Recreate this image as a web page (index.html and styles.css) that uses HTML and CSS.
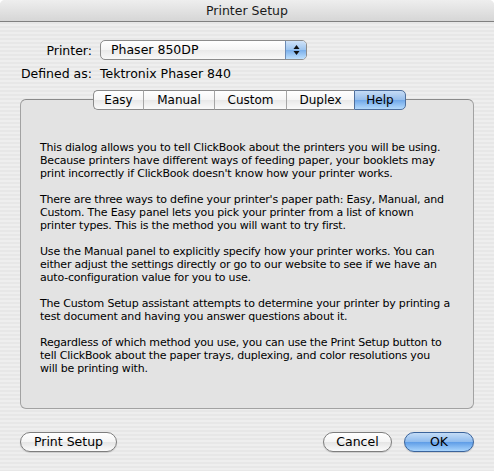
FILE: index.html
```html
<!DOCTYPE html>
<html>
<head>
<meta charset="utf-8">
<link rel="stylesheet" href="styles.css">
</head>
<body>
<div class="window">
  <div class="titlebar">Printer Setup</div>
  <div class="content">
    <div class="form">
      <div class="label">Printer:</div>
      <div class="popup">
        <span class="popup-text">Phaser 850DP</span>
        <span class="popup-arrows">
          <svg width="7" height="12" viewBox="0 0 7 12"><path d="M3.5 1 L6.5 5 L0.5 5 Z" fill="#111"/><path d="M3.5 11 L6.5 7 L0.5 7 Z" fill="#111"/></svg>
        </span>
      </div>
      <div class="label">Defined as:</div>
      <div class="value">Tektronix Phaser 840</div>
    </div>
    <div class="tabs">
      <div class="tab tab-easy">Easy</div>
      <div class="tab tab-manual">Manual</div>
      <div class="tab tab-custom">Custom</div>
      <div class="tab tab-duplex">Duplex</div>
      <div class="tab tab-help selected">Help</div>
    </div>
    <div class="panel">
      <p>This dialog allows you to tell ClickBook about the printers you will be using.<br>Because printers have different ways of feeding paper, your booklets may<br>print incorrectly if ClickBook doesn't know how your printer works.</p>
      <p>There are three ways to define your printer's paper path: Easy, Manual, and<br>Custom. The Easy panel lets you pick your printer from a list of known<br>printer types. This is the method you will want to try first.</p>
      <p>Use the Manual panel to explicitly specify how your printer works. You can<br>either adjust the settings directly or go to our website to see if we have an<br>auto-configuration value for you to use.</p>
      <p>The Custom Setup assistant attempts to determine your printer by printing a<br>test document and having you answer questions about it.</p>
      <p>Regardless of which method you use, you can use the Print Setup button to<br>tell ClickBook about the paper trays, duplexing, and color resolutions you<br>will be printing with.</p>
    </div>
    <div class="buttons">
      <div class="btn btn-print">Print Setup</div>
      <div class="spacer"></div>
      <div class="btn btn-cancel">Cancel</div>
      <div class="btn btn-ok">OK</div>
    </div>
  </div>
</div>
</body>
</html>
```
FILE: styles.css
```css
html, body {
  margin: 0;
  padding: 0;
  background: #ffffff;
}
body {
  width: 494px;
  height: 471px;
  overflow: hidden;
  font-family: "DejaVu Sans", "Liberation Sans", sans-serif;
  color: #000;
}
.window {
  height: 471px;
  display: flex;
  flex-direction: column;
  background: repeating-linear-gradient(to bottom, #eeeeee 0px, #eeeeee 2px, #e7e7e7 2px, #e7e7e7 4px);
  border-radius: 5px 5px 0 0;
  overflow: hidden;
}
.titlebar {
  height: 21px;
  border-bottom: 1px solid #808080;
  background: linear-gradient(to bottom, #eeeeee, #d6d6d6);
  text-align: center;
  font-size: 12.5px;
  line-height: 22px;
  color: #1a1a1a;
}
.content {
  display: flex;
  flex-direction: column;
  padding: 18px 20px 0 20px;
}
.form {
  display: grid;
  grid-template-columns: 72px auto;
  column-gap: 8px;
  row-gap: 5px;
  align-items: center;
  font-size: 12.5px;
}
.label {
  text-align: right;
}
.value {
  line-height: 17px;
}
.popup {
  width: 207px;
  height: 20px;
  box-sizing: border-box;
  border: 1px solid #8c8c8c;
  border-radius: 5px;
  background: linear-gradient(to bottom, #ffffff, #f4f4f4 50%, #e9e9e9 50%, #f8f8f8);
  display: flex;
  overflow: hidden;
}
.popup-text {
  flex: 1;
  padding-left: 10px;
  line-height: 18px;
}
.popup-arrows {
  width: 20px;
  border-left: 1px solid #6c8bb5;
  background: linear-gradient(to bottom, #d0e3f8, #9cc4ef 50%, #78aeea 50%, #bfe0fd);
  display: flex;
  align-items: center;
  justify-content: center;
}
.tabs {
  display: flex;
  margin-top: 8px;
  margin-left: 73px;
  height: 20px;
  position: relative;
  z-index: 1;
  font-size: 12px;
}
.tab {
  box-sizing: border-box;
  height: 20px;
  line-height: 18px;
  text-align: center;
  border-top: 1px solid #8a8a8a;
  border-bottom: 1px solid #8a8a8a;
  border-left: 1px solid #a6a6a6;
  background: linear-gradient(to bottom, #ffffff, #f5f5f5 50%, #e8e8e8 50%, #fafafa);
}
.tab-easy { width: 50px; border-left-color: #8a8a8a; border-radius: 5px 0 0 5px; }
.tab-manual { width: 71px; }
.tab-custom { width: 72px; }
.tab-duplex { width: 68px; }
.tab-help {
  width: 52px;
  border-right: 1px solid #4f6f9c;
  border-radius: 0 5px 5px 0;
}
.tab.selected {
  border-color: #4f6f9c;
  background: linear-gradient(to bottom, #c6dcf5, #96bdeb 50%, #6fa7e8 50%, #b3d9fc);
}
.panel {
  margin-top: -11px;
  width: 454px;
  height: 310px;
  box-sizing: border-box;
  border: 1px solid #a2a2a2;
  border-top-color: #8a8a8a;
  border-radius: 6px;
  background: #e3e3e3;
  padding: 41px 0 0 19px;
  font-size: 11px;
  letter-spacing: -0.2px;
  line-height: 13px;
  white-space: nowrap;
}
.panel p {
  margin: 0 0 13px 0;
}
.buttons {
  display: flex;
  margin-top: 23px;
  font-size: 12.5px;
}
.spacer {
  flex: 1;
}
.btn {
  box-sizing: border-box;
  height: 20px;
  line-height: 18px;
  text-align: center;
  border: 1px solid #7d7d7d;
  border-radius: 10px;
  background: linear-gradient(to bottom, #ffffff, #f4f4f4 50%, #e4e4e4 50%, #fbfbfb);
  box-shadow: 0 1px 1px rgba(0,0,0,0.15);
}
.btn-print { width: 97px; }
.btn-cancel { width: 69px; margin-right: 12px; }
.btn-ok {
  width: 70px;
  border-color: #3a639b;
  background: linear-gradient(to bottom, #c4dcf6, #8ebbee 50%, #5c9be6 50%, #a9d5fd);
}
```
